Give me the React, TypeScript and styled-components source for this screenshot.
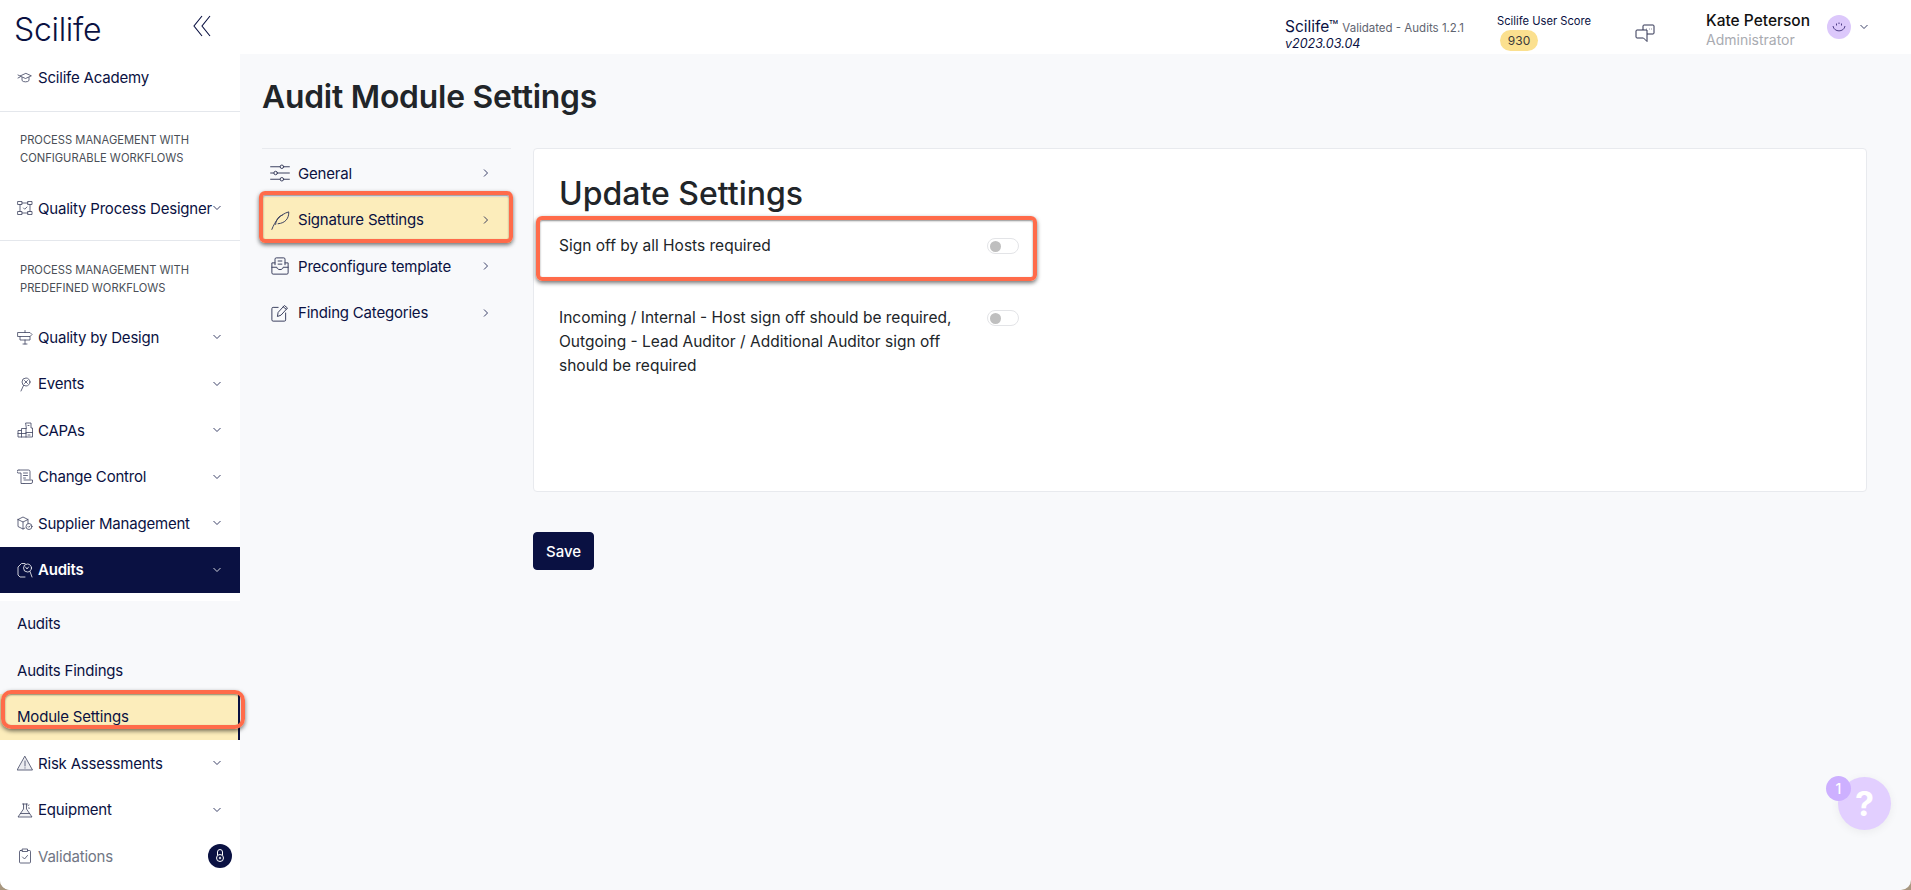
import React from 'react';
import styled, { createGlobalStyle } from 'styled-components';

const navy = '#0a1142';

const GlobalStyle = createGlobalStyle`
	html, body {
		margin: 0;
		padding: 0;
		height: 100%;
		background: #a8977f;
	}
	body {
		font-family: 'Inter', 'Liberation Sans', sans-serif;
		color: ${navy};
	}
	* {
		box-sizing: border-box;
	}
`;

type IconProps = { size?: number };

const Svg = ({ children, size = 16 }: React.PropsWithChildren<IconProps>) => (
	<svg
		width={size}
		height={size}
		viewBox="0 0 16 16"
		fill="none"
		stroke="currentColor"
		strokeWidth="0.8"
		strokeLinecap="round"
		strokeLinejoin="round"
	>
		{children}
	</svg>
);

const icons: Record<string, React.ReactNode> = {
	academy: (
		<>
			<path d="M8.5 3.5 3 6l5.5 2.5L14 6z" />
			<path d="M5 7.5v3c1 1.8 6 1.8 7 0v-3M1 5l2 1M1 8l2-1" />
		</>
	),
	designer: (
		<>
			<rect x="1" y="1.5" width="4" height="3" />
			<rect x="11" y="1.5" width="4" height="3" />
			<rect x="1" y="11.5" width="4" height="3" />
			<rect x="11" y="11.5" width="4" height="3" />
			<path d="M5 3h6M5 13h6M3 4.5v7M13 4.5v7M6.5 8l1.2 1.2L10 7" />
		</>
	),
	design: <path d="M1 3.5h12l2 2-2 2H1zM3 7.5V11h10V7.5M8 1.5v2M8 11v4M6 15h4" />,
	events: (
		<>
			<circle cx="9" cy="6" r="4" />
			<path d="M7.5 4.5l3 3M10.5 4.5l-3 3M6.5 9.500 4 15" />
		</>
	),
	capas: (
		<>
			<path d="M9 1h5v5h1.5v9H1V8.5h3.5v-2H9z" />
			<path d="M9 6.5V15M4.5 8.5V15M9 10.5h6.5M1 11.5h8M11 3.5h1M11 13h2" />
		</>
	),
	change: (
		<>
			<path d="M2 1h9.5A1.5 1.5 0 0 1 13 2.5V10M2 1A1.5 1.5 0 0 0 1 4h3v10.5h3" />
			<path d="M6.5 4h4M6.5 6.5h4M6.5 9h2M7 11h8.5v2a1.5 1.5 0 0 1-1.5 1.5H7" />
		</>
	),
	supplier: (
		<>
			<path d="M1 4.5 6 2l5 2.5v4M1 4.5v7L6 14l2-1M1 4.5 6 7l5-2.5M6 7v7" />
			<circle cx="12" cy="11.5" r="3" />
			<path d="M11 11.5l.8.8 1.4-1.5" />
		</>
	),
	audits: (
		<>
			<path d="M8 15H3L1 13V5l3.5-3.5H8" />
			<circle cx="10.5" cy="6" r="4" />
			<path d="M13 9.5l2 5.5M8.5 5l1.5 2 1.5-2" />
		</>
	),
	risk: (
		<>
			<path d="M8 1.5 15.5 15H.5z" fill="rgba(10,17,66,0.08)" />
			<path d="M8 6v5M8 12.8v.3" />
		</>
	),
	equipment: (
		<>
			<path d="M6.5 2v5L1 15h14L9.5 7V2M5.5 2h5M3.5 11.5h9" fill="rgba(10,17,66,0.05)" />
			<path d="M11 3.5l1-.5M11.5 6l1 .2" />
		</>
	),
	validations: (
		<>
			<rect x="2.5" y="2.5" width="11" height="12.5" rx="1" />
			<rect x="5.5" y="1" width="5" height="2.5" fill="#fff" />
			<path d="M5.5 9l2 2 3-3.5" />
		</>
	),
	general: (
		<>
			<path d="M.5 3H8M11 3h4.5M.5 8H3M6 8h9.5M.5 13H8M11 13h4.5" />
			<circle cx="9.5" cy="3" r="1.4" />
			<circle cx="4.5" cy="8" r="1.4" />
			<circle cx="9.5" cy="13" r="1.4" />
		</>
	),
	signature: (
		<>
			<path d="M1.5 15.5C4 9 8 3.5 15 1.5c.2 5-2.5 9-8.5 9.5" />
			<path d="M4.5 11.5C5 7 7 5 10 4" />
		</>
	),
	template: (
		<>
			<path d="M4 7V2.5a1 1 0 0 1 1-1h6a1 1 0 0 1 1 1V7" />
			<path d="M6.5 4h3M6.5 6.5h3" />
			<path d="M4 5.5H1.5v8a1 1 0 0 0 1 1h11a1 1 0 0 0 1-1v-8H12M1.5 9h4c0 2.500 5 2.500 5 0h4" />
		</>
	),
	finding: (
		<>
			<path d="M6.5 3.5h-4a1 1 0 0 0-1 1v9a1 1 0 0 0 1 1h9a1 1 0 0 0 1-1V8" />
			<path d="M6 10.5l.5-3 5-5.5 2.5 2-5 5.5zM10.5 3l2.5 2" />
		</>
	),
};

const Chevron = ({ dir = 'down' }: { dir?: 'down' | 'right' }) => (
	<svg width="10" height="10" viewBox="0 0 10 10" fill="none" stroke="currentColor" strokeWidth="0.8">
		{dir === 'down' ? <path d="M1.5 3 5 6.5 8.5 3" /> : <path d="M3 1.5 6.5 5 3 8.5" />}
	</svg>
);

const Window = styled.div`
	position: relative;
	display: grid;
	grid-template-columns: 240px 1fr;
	width: 1911px;
	height: 890px;
	overflow: hidden;
	background: #f8f9fb;
	border-radius: 0 0 10px 10px;
`;

const Sidebar = styled.aside`
	display: flex;
	flex-direction: column;
	background: #fff;
	height: 890px;
`;

const LogoRow = styled.div`
	display: flex;
	align-items: center;
	justify-content: space-between;
	height: 54px;
	padding: 4px 29px 0 14px;
`;

const Logo = styled.div`
	font-size: 32px;
	font-weight: 300;
	letter-spacing: -0.3px;
	color: ${navy};
`;

const Collapse = styled.svg`
	margin-bottom: 6px;
`;

const Section = styled.div`
	display: flex;
	flex-direction: column;
	border-bottom: 1px solid #e4e7ec;
`;

const Caption = styled.div<{ $top: number; $bottom?: number }>`
	padding: ${p => p.$top}px 20px ${p => p.$bottom ?? 0}px;
	font-size: 11.2px;
	line-height: 18px;
	color: #4a4f57;
	text-transform: uppercase;
`;

const NavRow = styled.div<{ $active?: boolean; $muted?: boolean; $h?: number; $shift?: number }>`
	display: flex;
	align-items: center;
	flex: none;
	height: ${p => p.$h ?? 46.5}px;
	padding: 0 18px 0 17px;
	padding-top: ${p => Math.max(p.$shift ?? 0, 0)}px;
	padding-bottom: ${p => Math.max(-(p.$shift ?? 0), 0)}px;
	font-size: 15px;
	font-weight: ${p => (p.$active ? 600 : 400)};
	letter-spacing: -0.2px;
	background: ${p => (p.$active ? navy : 'transparent')};
	color: ${p => (p.$active ? '#fff' : p.$muted ? '#717684' : navy)};
	white-space: nowrap;
`;

const NavIcon = styled.span<{ $active?: boolean }>`
	display: flex;
	margin-right: 5px;
	color: ${p => (p.$active ? '#fff' : '#3d4260')};
`;

const NavLabel = styled.span`
	flex: 1;
`;

const SubMenu = styled.div`
	display: flex;
	flex-direction: column;
	margin-top: 7.5px;
	background: #f8f9fb;
`;

const SubItem = styled.div<{ $current?: boolean }>`
	position: relative;
	display: flex;
	align-items: center;
	height: 46.5px;
	padding-left: 17px;
	font-size: 15px;
	letter-spacing: -0.2px;
	background: ${p => (p.$current ? '#fcedbb' : 'transparent')};
	border-right: ${p => (p.$current ? `2px solid ${navy}` : 'none')};
`;

const Callout = styled.div`
	position: absolute;
	border: 4px solid #ff6b4a;
	border-radius: 6px;
	box-shadow: 0 2px 4px rgba(0, 0, 0, 0.55), inset 0 1px 2px rgba(0, 0, 0, 0.45);
	pointer-events: none;
`;

const ModuleCallout = styled(Callout)`
	left: 1px;
	right: -7px;
	top: -4px;
	height: 39px;
	border-radius: 10px;
`;

const LockBadge = styled.span`
	display: flex;
	align-items: center;
	justify-content: center;
	width: 24px;
	height: 24px;
	margin-right: -10px;
	border-radius: 50%;
	background: ${navy};
	color: #fff;
`;

const Main = styled.div`
	display: flex;
	flex-direction: column;
	min-width: 0;
`;

const Header = styled.header`
	display: flex;
	align-items: center;
	height: 54px;
	padding-left: 1045px;
	background: #fff;
`;

const Product = styled.div`
	width: 212px;
	padding-top: 16px;
	line-height: 16px;
	white-space: nowrap;
`;

const ProductName = styled.span`
	font-size: 15.5px;
`;

const ProductMeta = styled.span`
	margin-left: 4px;
	font-size: 11.5px;
	color: #5f6470;
`;

const ProductVersion = styled.div`
	font-size: 12.5px;
	font-style: italic;
`;

const Score = styled.div`
	display: flex;
	flex-direction: column;
	align-items: flex-start;
	width: 138px;
	padding-top: 11px;
`;

const ScoreLabel = styled.div`
	font-size: 11.2px;
	line-height: 14px;
`;

const ScorePill = styled.div`
	width: 38px;
	height: 21px;
	margin: 2px 0 0 3px;
	border-radius: 11px;
	background: #fbe08f;
	color: #3a3a3a;
	font-size: 12px;
	line-height: 21px;
	text-align: center;
`;

const Chat = styled.div`
	display: flex;
	width: 71px;
	padding-top: 12px;
	color: #2c3150;
`;

const User = styled.div`
	width: 121px;
	padding-top: 5px;
	line-height: 19px;
	white-space: nowrap;
`;

const UserName = styled.div`
	font-size: 15.5px;
	font-weight: 500;
	color: #111;
`;

const UserRole = styled.div`
	font-size: 14px;
	color: #a9abb1;
`;

const Avatar = styled.div`
	display: flex;
	align-items: center;
	justify-content: center;
	width: 24px;
	height: 24px;
	margin-right: 8px;
	border-radius: 50%;
	background: #dcc8fb;
	color: #3e2f7a;
`;

const Page = styled.div`
	display: flex;
	flex-direction: column;
	padding: 0 44px 0 22px;
`;

const PageTitle = styled.h1`
	margin: 24px 0 32px;
	font-size: 31.8px;
	line-height: 38px;
	font-weight: 600;
	letter-spacing: -0.2px;
	color: #212529;
`;

const Columns = styled.div`
	display: grid;
	grid-template-columns: 249px 1fr;
	column-gap: 22px;
`;

const SettingsMenu = styled.nav`
	display: flex;
	flex-direction: column;
	padding-top: 1px;
	border-top: 1px solid #e8eaee;
`;

const SettingsItem = styled.div<{ $current?: boolean }>`
	position: relative;
	display: flex;
	align-items: center;
	height: 46.5px;
	padding: 0 20px 0 8px;
	font-size: 15px;
	letter-spacing: -0.2px;
	color: ${navy};
	background: ${p => (p.$current ? '#fcedbb' : 'transparent')};
`;

const SettingsIcon = styled.span`
	display: flex;
	margin-right: 8px;
	color: #3d4260;
`;

const SettingsCallout = styled(Callout)`
	left: -3px;
	right: -2px;
	top: -5.5px;
	bottom: 0;
`;

const RightCol = styled.div`
	display: flex;
	flex-direction: column;
	align-items: flex-start;
`;

const Card = styled.section`
	width: 100%;
	height: 344px;
	padding: 26px 25px 0;
	background: #fff;
	border: 1px solid #e8eaee;
	border-radius: 4px;
`;

const CardTitle = styled.h2`
	margin: 0 0 21px;
	font-size: 32px;
	line-height: 38px;
	font-weight: 500;
	color: #212529;
`;

const SettingRow = styled.div`
	position: relative;
	display: grid;
	grid-template-columns: 403px 32px;
	column-gap: 25px;
	align-items: start;
	width: 460px;
	min-height: 72px;
	font-size: 15.5px;
	line-height: 24px;
	color: #212529;
`;

const SettingCallout = styled(Callout)`
	left: -23px;
	right: -18px;
	top: -18px;
	height: 65px;
`;

const Toggle = styled.span`
	display: flex;
	align-items: center;
	width: 32px;
	height: 16px;
	margin-top: 4px;
	padding-left: 2px;
	border: 1px solid #e3e4e7;
	border-radius: 8px;
	background: #fff;

	&::before {
		content: '';
		width: 11px;
		height: 11px;
		border-radius: 50%;
		background: #bfbfbf;
	}
`;

const SaveButton = styled.button`
	margin-top: 40px;
	width: 61px;
	height: 38px;
	border: 1px solid ${navy};
	border-radius: 4px;
	background: ${navy};
	color: #fff;
	font-family: inherit;
	font-size: 15px;
	font-weight: 500;
`;

const HelpButton = styled.div`
	position: absolute;
	right: 20px;
	bottom: 60px;
	display: flex;
	align-items: center;
	justify-content: center;
	width: 53px;
	height: 53px;
	border-radius: 50%;
	background: #e2cfff;
	box-shadow: 0 2px 10px rgba(0, 0, 0, 0.06);
	color: #fff;
	font-size: 34px;
	font-weight: 700;
`;

const HelpCount = styled.div`
	position: absolute;
	left: -12px;
	top: -1px;
	width: 25px;
	height: 25px;
	border-radius: 50%;
	background: #cdb0ff;
	color: #fff;
	font-size: 14px;
	font-weight: 500;
	line-height: 25px;
	text-align: center;
`;

const navTop = [
	{ icon: 'design', label: 'Quality by Design' },
	{ icon: 'events', label: 'Events' },
	{ icon: 'capas', label: 'CAPAs' },
	{ icon: 'change', label: 'Change Control' },
	{ icon: 'supplier', label: 'Supplier Management' },
];

const settingsMenu = [
	{ icon: 'general', label: 'General' },
	{ icon: 'signature', label: 'Signature Settings', current: true },
	{ icon: 'template', label: 'Preconfigure template' },
	{ icon: 'finding', label: 'Finding Categories' },
];

export default function App() {
	return (
		<>
			<GlobalStyle />
			<Window>
				<Sidebar>
					<LogoRow>
						<Logo>Scilife</Logo>
						<Collapse width="18" height="22" viewBox="0 0 18 22" fill="none" stroke={navy} strokeWidth="1.1">
							<path d="M9 1 1 11l8 10M17 1 9 11l8 10" />
						</Collapse>
					</LogoRow>
					<Section>
						<NavRow $h={57} $shift={-10}>
							<NavIcon><Svg>{icons.academy}</Svg></NavIcon>
							<NavLabel>Scilife Academy</NavLabel>
						</NavRow>
					</Section>
					<Section>
						<Caption $top={19}>Process Management with<br />Configurable Workflows</Caption>
						<NavRow $h={73} $shift={9}>
							<NavIcon><Svg>{icons.designer}</Svg></NavIcon>
							<NavLabel>Quality Process Designer</NavLabel>
							<Chevron />
						</NavRow>
					</Section>
					<Caption $top={20} $bottom={17}>Process Management with<br />Predefined Workflows</Caption>
					{navTop.map(item => (
						<NavRow key={item.label}>
							<NavIcon><Svg>{icons[item.icon]}</Svg></NavIcon>
							<NavLabel>{item.label}</NavLabel>
							<Chevron />
						</NavRow>
					))}
					<NavRow $active>
						<NavIcon $active><Svg>{icons.audits}</Svg></NavIcon>
						<NavLabel>Audits</NavLabel>
						<Chevron />
					</NavRow>
					<SubMenu>
						<SubItem>Audits</SubItem>
						<SubItem>Audits Findings</SubItem>
						<SubItem $current>
							Module Settings
							<ModuleCallout />
						</SubItem>
					</SubMenu>
					<NavRow>
						<NavIcon><Svg>{icons.risk}</Svg></NavIcon>
						<NavLabel>Risk Assessments</NavLabel>
						<Chevron />
					</NavRow>
					<NavRow>
						<NavIcon><Svg>{icons.equipment}</Svg></NavIcon>
						<NavLabel>Equipment</NavLabel>
						<Chevron />
					</NavRow>
					<NavRow $muted>
						<NavIcon><Svg>{icons.validations}</Svg></NavIcon>
						<NavLabel>Validations</NavLabel>
						<LockBadge>
							<svg width="14" height="16" viewBox="0 0 14 16" fill="none" stroke="#fff" strokeWidth="1">
								<path d="M4.5 7V4a2.5 2.5 0 0 1 5 0v3" />
								<circle cx="7" cy="10" r="3.5" />
								<circle cx="7" cy="10" r="0.8" />
							</svg>
						</LockBadge>
					</NavRow>
				</Sidebar>
				<Main>
					<Header>
						<Product>
							<ProductName>Scilife™</ProductName>
							<ProductMeta>Validated - Audits 1.2.1</ProductMeta>
							<ProductVersion>v2023.03.04</ProductVersion>
						</Product>
						<Score>
							<ScoreLabel>Scilife User Score</ScoreLabel>
							<ScorePill>930</ScorePill>
						</Score>
						<Chat>
							<svg width="20" height="20" viewBox="0 0 20 20" fill="none" stroke="currentColor" strokeWidth="1">
								<path d="M8 7V3a1 1 0 0 1 1-1h9a1 1 0 0 1 1 1v7a1 1 0 0 1-1 1h-6" />
								<path d="M12 7H2a1 1 0 0 0-1 1v6a1 1 0 0 0 1 1h6.5l3.5 3.5V7" />
								<path d="M11.5 6h.5M14 6h.5M16.5 6h.5" />
							</svg>
						</Chat>
						<User>
							<UserName>Kate Peterson</UserName>
							<UserRole>Administrator</UserRole>
						</User>
						<Avatar>
							<svg width="16" height="16" viewBox="0 0 16 16" fill="none" stroke="currentColor" strokeWidth="0.9">
								<path d="M2 7c1 6.5 11 6.5 12 0M5.5 4.5v2M10.5 4.5v2M8 3.5V5" />
							</svg>
						</Avatar>
						<Chevron />
					</Header>
					<Page>
						<PageTitle>Audit Module Settings</PageTitle>
						<Columns>
							<SettingsMenu>
								{settingsMenu.map(item => (
									<SettingsItem key={item.label} $current={item.current}>
										<SettingsIcon><Svg size={20}>{icons[item.icon]}</Svg></SettingsIcon>
										<NavLabel>{item.label}</NavLabel>
										<Chevron dir="right" />
										{item.current && <SettingsCallout />}
									</SettingsItem>
								))}
							</SettingsMenu>
							<RightCol>
								<Card>
									<CardTitle>Update Settings</CardTitle>
									<SettingRow>
										<span>Sign off by all Hosts required</span>
										<Toggle />
										<SettingCallout />
									</SettingRow>
									<SettingRow>
										<span>
											Incoming / Internal - Host sign off should be required,
											Outgoing - Lead Auditor / Additional Auditor sign off
											should be required
										</span>
										<Toggle />
									</SettingRow>
								</Card>
								<SaveButton>Save</SaveButton>
							</RightCol>
						</Columns>
					</Page>
				</Main>
				<HelpButton>
					?
					<HelpCount>1</HelpCount>
				</HelpButton>
			</Window>
		</>
	);
}
